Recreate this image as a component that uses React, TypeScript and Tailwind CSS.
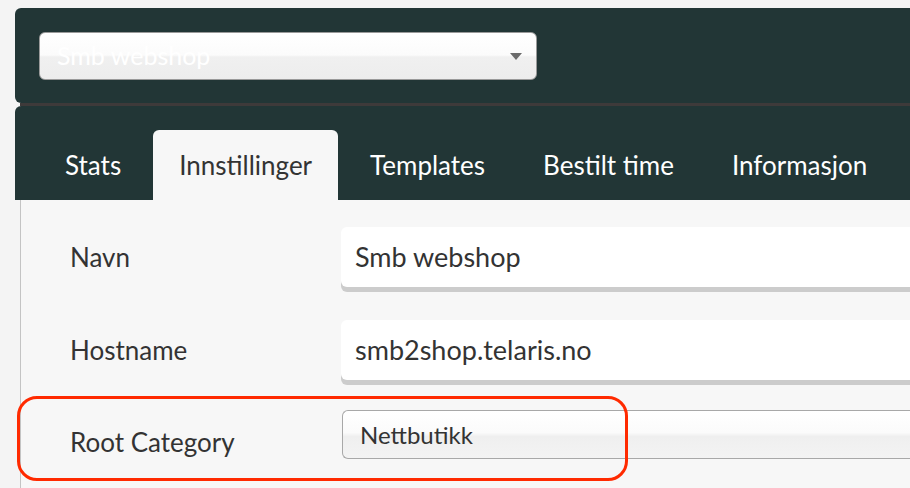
import React from 'react';

export default function App() {
  const tabs = ['Stats', 'Innstillinger', 'Templates', 'Bestilt time', 'Informasjon'];
  return (
    <div className="relative h-[488px] w-[910px] overflow-hidden bg-[#f4f4f4] pt-2 pl-[15px] font-['Lato',sans-serif] text-[#333]">
      {/* Shop picker */}
      <div className="flex h-[95px] items-center rounded-l-[6px] bg-[#223636] pl-6">
        <div className="flex h-[48px] w-[498px] items-center justify-between rounded-[6px] border border-[#9a9a9a] bg-[linear-gradient(to_bottom,#ffffff_0%,#fbfbfb_48%,#f0f0f0_52%,#ededed_100%)] pl-[17px] pr-[14px]">
          <span className="text-[25px] leading-none text-white">Smb webshop</span>
          <span className="mt-[2px] h-0 w-0 border-x-[6px] border-t-[7px] border-x-transparent border-t-[#6b6b6b]" />
        </div>
      </div>
      <div className="ml-[5px] h-[3px] bg-[#3e3a3a]" />

      {/* Tabs */}
      <div className="flex h-[94px] items-end rounded-tl-[6px] bg-[#223636] pl-[21px]">
        {tabs.map((t) => (
          <div
            key={t}
            className={
              t === 'Innstillinger'
                ? 'mx-[3px] flex h-[70px] items-center rounded-t-[6px] bg-[#f7f7f7] px-[26px] text-[26px] text-[#333]'
                : 'flex h-[70px] items-center px-[29px] text-[26px] text-white'
            }
          >
            {t}
          </div>
        ))}
      </div>

      {/* Form */}
      <div className="ml-[5px] h-[300px] border-l border-[#c4c4c4] bg-[#f7f7f7] pt-[27px]">
        <div className="flex h-[60px] items-center">
          <div className="w-[320px] pl-[49px] text-[26px]">Navn</div>
          <div className="flex h-[60px] flex-1 items-center rounded-l-[6px] bg-white pl-[14px] text-[27px] shadow-[0_5px_0_#cccccc]">Smb webshop</div>
        </div>
        <div className="mt-[33px] flex h-[60px] items-center">
          <div className="w-[320px] pl-[49px] text-[26px]">Hostname</div>
          <div className="flex h-[60px] flex-1 items-center rounded-l-[6px] bg-white pl-[14px] text-[27px] shadow-[0_5px_0_#cccccc]">smb2shop.telaris.no</div>
        </div>
        <div className="mt-[30px] flex h-[49px] items-center">
          <div className="w-[321px] pl-[49px] pt-[16px] text-[26px]">Root Category</div>
          <div className="flex h-[49px] flex-1 items-center rounded-l-[6px] border border-r-0 border-[#a8a8a8] bg-[linear-gradient(to_bottom,#ffffff_0%,#fbfbfb_46%,#efefef_54%,#f3f3f3_100%)] pl-[17px] text-[24px]">Nettbutikk</div>
        </div>
      </div>

      {/* Highlight annotation */}
      <div className="absolute left-[17px] top-[396px] h-[85px] w-[611px] rounded-[20px] border-[3px] border-[#ff2a00]" />
    </div>
  );
}
